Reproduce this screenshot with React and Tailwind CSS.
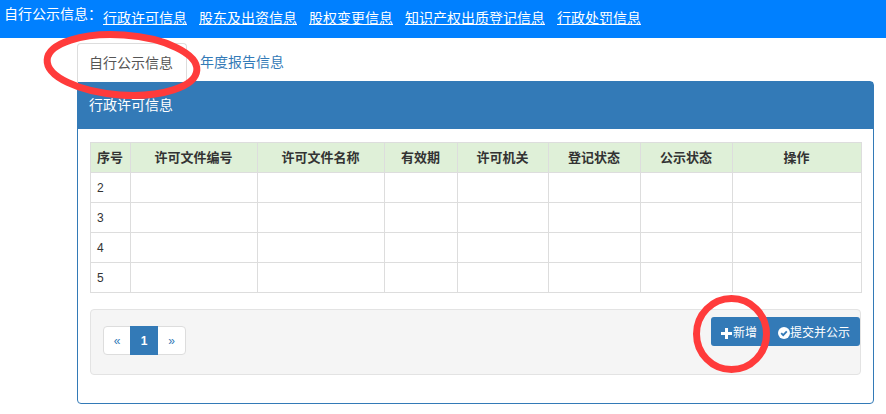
const font = { fontFamily: '"Liberation Sans", "Noto Sans CJK SC", sans-serif' };

const links = ["行政许可信息", "股东及出资信息", "股权变更信息", "知识产权出质登记信息", "行政处罚信息"];

const columns = [
  { label: "序号", width: "w-[40px]" },
  { label: "许可文件编号", width: "w-[127px]" },
  { label: "许可文件名称", width: "w-[127px]" },
  { label: "有效期", width: "w-[73px]" },
  { label: "许可机关", width: "w-[91px]" },
  { label: "登记状态", width: "w-[92px]" },
  { label: "公示状态", width: "w-[92px]" },
  { label: "操作", width: "w-[129px]" },
];

const rows = [2, 3, 4, 5];

function PlusIcon() {
  return (
    <svg width="11" height="11" viewBox="0 0 11 11" className="shrink-0" fill="#fff">
      <path d="M4 0h3v4h4v3H7v4H4V7H0V4h4z" />
    </svg>
  );
}

function CheckIcon() {
  return (
    <svg width="12" height="12" viewBox="0 0 12 12" className="shrink-0">
      <circle cx="6" cy="6" r="6" fill="#fff" />
      <path d="M3.2 6.2l2 2 3.6-3.8" fill="none" stroke="#337ab7" strokeWidth="1.8" />
    </svg>
  );
}

export default function App() {
  return (
    <div className="relative h-[414px] w-[886px] overflow-hidden bg-white text-[13px] text-[#333]" style={font}>
      {/* Top bar */}
      <div className="flex h-[38px] items-start bg-[#0080ff] pl-[4px] text-white">
        <span className="mt-[4px] w-[99px] text-[14px] leading-[20px]">自行公示信息：</span>
        <div className="mt-[8px] flex gap-[12px] text-[14px] leading-[20px]">
          {links.map((l) => (
            <a key={l} href="#" className="underline">
              {l}
            </a>
          ))}
        </div>
      </div>

      {/* Tabs */}
      <div className="ml-[77px] mt-[5px] flex h-[38px] text-[14px]">
        <div className="h-[39px] w-[110px] rounded-t border border-b-0 border-[#ddd] bg-white pl-[11px] pt-[9px] leading-[20px] text-[#555]">
          自行公示信息
        </div>
        <a href="#" className="pl-[13px] pt-[9px] leading-[20px] text-[#337ab7]">
          年度报告信息
        </a>
      </div>

      {/* Panel */}
      <div className="ml-[77px] h-[323px] w-[797px] rounded border border-[#337ab7] bg-white">
        <div className="h-[47px] bg-[#337ab7] pl-[11px] pt-[13px] text-[14px] leading-[20px] text-white">行政许可信息</div>

        <div className="px-[12px] pt-[13px]">
          <table className="w-[771px] table-fixed border-collapse">
            <thead>
              <tr className="h-[30px] bg-[#dff0d8]">
                {columns.map((c) => (
                  <th key={c.label} className={`${c.width} border border-[#ddd] p-0 pr-px text-center text-[13px] font-bold`}>
                    {c.label}
                  </th>
                ))}
              </tr>
            </thead>
            <tbody>
              {rows.map((n) => (
                <tr key={n} className="h-[30px]">
                  <td className="border border-[#ddd] pl-[6px] text-[12px]">{n}</td>
                  {columns.slice(1).map((c) => (
                    <td key={c.label} className="border border-[#ddd]" />
                  ))}
                </tr>
              ))}
            </tbody>
          </table>

          {/* Pager and actions */}
          <div className="mt-[16px] flex h-[66px] w-[771px] justify-between rounded border border-[#e3e3e3] bg-[#f5f5f5] pl-[12px] pr-0 pt-[7px]">
            <div className="mt-[9px] flex h-[29px] w-[83px] rounded border border-[#ddd] bg-white text-[12px]">
              <span className="flex w-[26px] items-center justify-center text-[#337ab7]">«</span>
              <span className="-my-px flex w-[28px] items-center justify-center bg-[#337ab7] font-bold text-white">1</span>
              <span className="flex w-[27px] items-center justify-center text-[#337ab7]">»</span>
            </div>
            <div className="flex h-[29px] w-[149px] items-center rounded-[3px] bg-[#337ab7] pt-[3px] text-[12px] text-white">
              <span className="ml-[10px] flex w-[47px] items-center gap-px">
                <PlusIcon />
                新增
              </span>
              <span className="ml-[10px] flex items-center">
                <CheckIcon />
                提交并公示
              </span>
            </div>
          </div>
        </div>
      </div>

      {/* Hand drawn red marks */}
      <svg className="absolute left-0 top-0" width="886" height="414" fill="none" stroke="#ff3b3b" strokeWidth="7">
        <ellipse cx="122" cy="65" rx="75" ry="30" transform="rotate(4 122 65)" />
        <ellipse cx="731.5" cy="334" rx="35" ry="35.5" />
      </svg>
    </div>
  );
}
